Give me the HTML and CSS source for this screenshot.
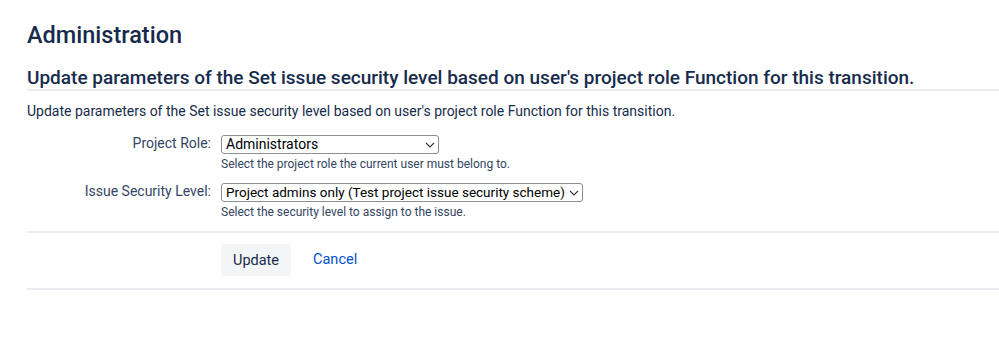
FILE: index.html
```html
<!DOCTYPE html>
<html lang="en">
<head>
    <meta charset="UTF-8">
    <title>Administration</title>
    <link rel="stylesheet" href="styles.css">
</head>
<body>
    <div class="page">
        <h1 class="page-title">Administration</h1>

        <form class="aui-form" action="#" method="post">
            <h2 class="form-title">Update parameters of the Set issue security level based on user's project role Function for this transition.</h2>
            <p class="form-intro">Update parameters of the Set issue security level based on user's project role Function for this transition.</p>

            <div class="field-group">
                <label for="projectRole">Project Role:</label>
                <div class="field">
                    <div class="select-wrap">
                        <select id="projectRole" class="select select-role" name="projectRole">
                            <option>Administrators</option>
                            <option>Developers</option>
                            <option>Users</option>
                        </select>
                        <svg class="chevron" width="10" height="6" viewBox="0 0 10 6"><path d="M1 1l4 4 4-4" fill="none" stroke="#333" stroke-width="1.1"/></svg>
                    </div>
                    <div class="description">Select the project role the current user must belong to.</div>
                </div>
            </div>

            <div class="field-group">
                <label for="securityLevel">Issue Security Level:</label>
                <div class="field">
                    <div class="select-wrap">
                        <select id="securityLevel" class="select select-level" name="securityLevel">
                            <option>Project admins only (Test project issue security scheme)</option>
                        </select>
                        <svg class="chevron" width="10" height="6" viewBox="0 0 10 6"><path d="M1 1l4 4 4-4" fill="none" stroke="#333" stroke-width="1.1"/></svg>
                    </div>
                    <div class="description">Select the security level to assign to the issue.</div>
                </div>
            </div>

            <div class="buttons-container">
                <div class="buttons">
                    <button type="submit" class="button">Update</button>
                    <a href="#" class="cancel">Cancel</a>
                </div>
            </div>
        </form>
    </div>
</body>
</html>
```

FILE: styles.css
```css
:root {
    --text-primary: #172b4d;
    --text-label: #344563;
    --link-color: #0052cc;
    --border-color: #ebecf0;
    --button-bg: #f4f5f7;
}

* {
    margin: 0;
    padding: 0;
    box-sizing: border-box;
}

body {
    font-family: Roboto, "Liberation Sans", sans-serif;
    color: var(--text-primary);
    background: #ffffff;
    font-size: 14px;
    line-height: 20px;
}

.page {
    padding: 20px 0 0 27px;
}

.page-title {
    font-size: 23.5px;
    font-weight: 500;
    line-height: 30px;
    margin-bottom: 17px;
}

.form-title {
    font-size: 19px;
    font-weight: 500;
    line-height: 22px;
    border-bottom: 2px solid var(--border-color);
}

.form-intro {
    margin: 10px 0 13px;
}

.field-group {
    display: grid;
    grid-template-columns: 184px auto;
    column-gap: 10px;
    margin-bottom: 10px;
}

.field-group label {
    text-align: right;
    color: var(--text-label);
    line-height: 18px;
}

.select-wrap {
    position: relative;
    display: inline-block;
}

.select {
    appearance: none;
    -webkit-appearance: none;
    font-family: Roboto, "Liberation Sans", sans-serif;
    font-size: 14px;
    color: #000000;
    height: 19px;
    line-height: 17px;
    padding: 0 16px 0 4px;
    border: 1px solid #8f8f8f;
    border-radius: 3px;
    background: #ffffff;
    display: block;
}

.select-role {
    width: 218px;
}

.select-level {
    width: 362px;
    font-size: 13.5px;
}

.chevron {
    position: absolute;
    right: 4px;
    top: 7px;
    pointer-events: none;
}

.description {
    font-size: 12px;
    line-height: 16px;
    margin-top: 2px;
    color: var(--text-label);
}

.buttons-container {
    border-top: 2px solid var(--border-color);
    border-bottom: 2px solid var(--border-color);
    margin-top: 11px;
    padding: 11px 0 12px;
}

.buttons {
    padding-left: 194px;
    display: flex;
    align-items: center;
    gap: 22px;
}

.button {
    font-family: Roboto, "Liberation Sans", sans-serif;
    font-size: 14.5px;
    color: var(--text-primary);
    background: var(--button-bg);
    border: none;
    border-radius: 3px;
    height: 32px;
    padding: 0 12px;
    cursor: pointer;
}

.cancel {
    color: var(--link-color);
    font-size: 14.5px;
    text-decoration: none;
}
```
